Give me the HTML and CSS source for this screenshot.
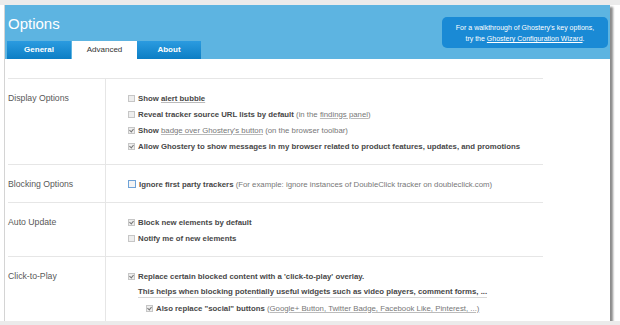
FILE: index.html
```html
<!DOCTYPE html>
<html lang="en">
<head>
  <meta charset="UTF-8">
  <title>Ghostery Options</title>
  <link rel="stylesheet" href="styles.css">
</head>
<body>

  <div class="window">

    <!-- Header with title, tabs and wizard hint -->
    <header class="header">
      <div class="header-left">
        <h1>Options</h1>
        <nav class="tabs">
          <div class="tab">General</div>
          <div class="tab active">Advanced</div>
          <div class="tab">About</div>
        </nav>
      </div>
      <div class="info">
        For a walkthrough of Ghostery's key options,<br>
        try the <span class="info-link">Ghostery Configuration Wizard</span>.
      </div>
    </header>

    <!-- Advanced options -->
    <div class="options">

      <div class="row">
        <div class="label">Display Options</div>
        <div class="items">
          <div class="item"><span class="cb"></span>Show&nbsp;<span class="link">alert bubble</span></div>
          <div class="item"><span class="cb"></span>Reveal tracker source URL lists by default&nbsp;<span class="note">(in the <span class="link">findings panel</span>)</span></div>
          <div class="item"><span class="cb on"></span>Show&nbsp;<span class="note"><span class="link">badge over Ghostery's button</span> (on the browser toolbar)</span></div>
          <div class="item"><span class="cb on"></span>Allow Ghostery to show messages in my browser related to product features, updates, and promotions</div>
        </div>
      </div>

      <div class="row">
        <div class="label">Blocking Options</div>
        <div class="items">
          <div class="item"><span class="cb focus"></span>Ignore first party trackers&nbsp;<span class="note">(For example: ignore instances of DoubleClick tracker on doubleclick.com)</span></div>
        </div>
      </div>

      <div class="row">
        <div class="label">Auto Update</div>
        <div class="items">
          <div class="item"><span class="cb on"></span>Block new elements by default</div>
          <div class="item"><span class="cb"></span>Notify me of new elements</div>
        </div>
      </div>

      <div class="row">
        <div class="label">Click-to-Play</div>
        <div class="items">
          <div class="item"><span class="cb on"></span>Replace certain blocked content with a 'click-to-play' overlay.</div>
          <div class="item sub"><span class="hint">This helps when blocking potentially useful widgets such as video players, comment forms, ...</span></div>
          <div class="item subsub"><span class="cb on"></span>Also replace "social" buttons&nbsp;<span class="note link">(Google+ Button, Twitter Badge, Facebook Like, Pinterest, ...)</span></div>
        </div>
      </div>

    </div>
  </div>

</body>
</html>
```

FILE: styles.css
```css
/* Page and window frame */
body {
  margin: 0;
  font-family: "Liberation Sans", Arial, sans-serif;
  background: linear-gradient(#ebebeb 0, #ebebeb 5px, #fff 5px);
}

.window {
  margin: 5px 0 0 5px;
  width: 605px;
  height: 316px;
  overflow: hidden;
  background: #fff;
  box-shadow: -1px 0 0 #d4d4d4, 3px 2px 2px rgba(0, 0, 0, 0.45);
}

/* Header */
.header {
  height: 54px;
  background-color: #5db4e1;
  display: flex;
  justify-content: space-between;
}

.header-left {
  display: flex;
  flex-direction: column;
  justify-content: space-between;
}

.header h1 {
  margin: 10px 0 0 3px;
  font-size: 15px;
  line-height: 17px;
  font-weight: normal;
  color: #fff;
}

.tabs {
  display: flex;
  padding-left: 2px;
}

.tab {
  width: 64px;
  height: 18px;
  line-height: 18px;
  text-align: center;
  font-size: 8px;
  font-weight: bold;
  color: #fff;
  background: linear-gradient(#2b9be0, #0c7ec5);
}

.tab:first-child {
  margin-right: 1px;
}

.tab.active {
  width: 65px;
  background: #fff;
  color: #333;
  font-weight: normal;
}

.info {
  margin: 12px 2px 0 0;
  width: 166px;
  height: 31px;
  box-sizing: border-box;
  padding-top: 5px;
  background-color: #1a8ad5;
  border-radius: 5px;
  color: #fff;
  font-size: 7px;
  line-height: 11px;
  text-align: center;
}

.info-link {
  text-decoration: underline;
}

/* Options table */
.options {
  margin: 19px 0 0 3px;
  width: 535px;
  border-top: 1px solid #e6e6e6;
}

.row {
  display: flex;
  border-bottom: 1px solid #e6e6e6;
}

.label {
  width: 97px;
  flex: none;
  border-right: 1px solid #e6e6e6;
  padding: 11px 0 10px;
  font-size: 8.7px;
  line-height: 16px;
  color: #595959;
}

.items {
  padding: 11px 0 10px 22px;
}

.item {
  display: flex;
  align-items: center;
  height: 16px;
  font-size: 7.8px;
  font-weight: bold;
  color: #474747;
  white-space: nowrap;
}

.item.sub {
  padding-left: 10px;
}

.item.subsub {
  padding-left: 18px;
}

.note {
  font-weight: normal;
  color: #777;
}

.link {
  text-decoration: underline;
  text-decoration-color: #bbb;
}

.hint {
  border-bottom: 1px solid #d8d8d8;
  line-height: 10px;
}

/* Checkboxes */
.cb {
  position: relative;
  flex: none;
  width: 7px;
  height: 7px;
  box-sizing: border-box;
  margin-right: 3px;
  border: 1px solid #c6c6c6;
  background-color: #eee;
}

.cb.on::after {
  content: "";
  position: absolute;
  left: 1px;
  top: 0;
  width: 2px;
  height: 3px;
  border: solid #777;
  border-width: 0 1px 1px 0;
  transform: rotate(40deg);
}

.cb.focus {
  width: 8px;
  height: 8px;
  margin-right: 3px;
  border-color: #6fa3d8;
  background-color: #f4f4f4;
}
```
